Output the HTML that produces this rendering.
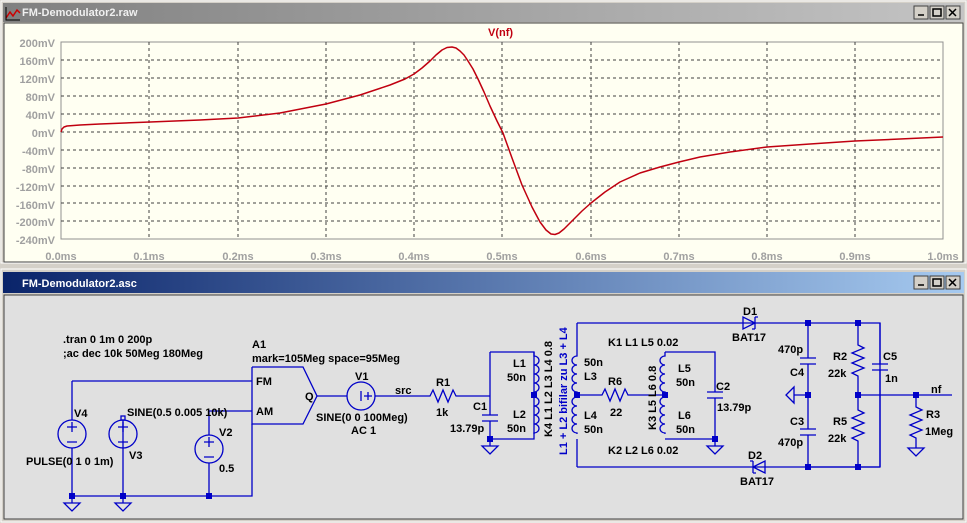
<!DOCTYPE html>
<html><head><meta charset="utf-8"><style>
html,body{margin:0;padding:0;width:967px;height:523px;overflow:hidden;background:#d4d0c8}
svg{display:block}
text{font-family:"Liberation Sans",sans-serif;font-weight:bold;font-size:11px}
</style></head><body>
<svg width="967" height="523" xmlns="http://www.w3.org/2000/svg">
<defs>
<linearGradient id="g1" x1="0" x2="1"><stop offset="0" stop-color="#808080"/><stop offset="1" stop-color="#c4c4c4"/></linearGradient>
<linearGradient id="g2" x1="0" x2="1"><stop offset="0" stop-color="#0a246a"/><stop offset="1" stop-color="#a6caf0"/></linearGradient>
</defs>
<rect width="967" height="523" fill="#d4d0c8"/>
<!-- top window -->
<rect x="1" y="1" width="965" height="262" fill="#d4d0c8" stroke="#fff"/>
<rect x="3" y="3" width="961" height="19" fill="url(#g1)"/>
<path d="M6 18 l4-6 3 4 4-6 3 3" stroke="#c00" stroke-width="1.5" fill="none"/>
<path d="M6 7 v13 h14" stroke="#000" fill="none"/>
<text x="22" y="16" fill="#f0f0f0" font-size="12">FM-Demodulator2.raw</text>
<g fill="#d4d0c8" stroke="#404040"><rect x="914" y="6" width="14" height="13"/><rect x="930" y="6" width="14" height="13"/><rect x="946" y="6" width="14" height="13"/></g>
<path d="M918 15h6M933 9h8v7h-8zM949 9l7 7M956 9l-7 7" stroke="#000" stroke-width="1.5" fill="none"/>
<rect x="4" y="23" width="959" height="239" fill="#fffff2" stroke="#404040"/>
<text x="488" y="36" fill="#c00010" font-size="12">V(nf)</text>
<rect x="61" y="42" width="882" height="197" fill="none" stroke="#909090"/>
<g stroke="#404040" stroke-dasharray="3,3" stroke-width="1">
<path d="M61 60H943M61 78H943M61 96H943M61 114H943M61 132H943M61 150H943M61 168H943M61 186H943M61 203H943M61 221H943"/>
<path d="M149 42V239M238 42V239M326 42V239M414 42V239M502 42V239M591 42V239M679 42V239M767 42V239M855 42V239"/>
</g>
<g fill="#a0a0a0" font-size="12" text-anchor="end">
<text x="55" y="47">200mV</text><text x="55" y="65">160mV</text><text x="55" y="83">120mV</text><text x="55" y="101">80mV</text><text x="55" y="119">40mV</text><text x="55" y="137">0mV</text><text x="55" y="155">-40mV</text><text x="55" y="173">-80mV</text><text x="55" y="191">-120mV</text><text x="55" y="209">-160mV</text><text x="55" y="226">-200mV</text><text x="55" y="244">-240mV</text>
</g>
<g fill="#a0a0a0" font-size="12" text-anchor="middle">
<text x="61" y="260">0.0ms</text><text x="149" y="260">0.1ms</text><text x="238" y="260">0.2ms</text><text x="326" y="260">0.3ms</text><text x="414" y="260">0.4ms</text><text x="502" y="260">0.5ms</text><text x="591" y="260">0.6ms</text><text x="679" y="260">0.7ms</text><text x="767" y="260">0.8ms</text><text x="855" y="260">0.9ms</text><text x="943" y="260">1.0ms</text>
</g>
<polyline fill="none" stroke="#c00010" stroke-width="1.5" stroke-linejoin="round" points="61,132 62,129 64,127 67,126 80,125 100,124 150,122 200,120 238,118 280,113 326,104 360,95 390,85 405,79 414,74 422,68 430,61 436,55 442,50 447,47.5 452,47 456,48 460,51 464,55 468,61 473,69 478,79 484,92 490,106 497,121 503,133 512,158 522,185 532,207 540,222 546,230 551,234 555,234.5 559,233 564,229 572,221 582,211 591,203 605,192 620,182 640,173 660,167 679,162 700,157 730,152 767,147 810,144 855,141 900,139 943,137"/>
<!-- bottom window -->
<rect x="1" y="269" width="965" height="253" fill="#d4d0c8" stroke="#fff"/>
<rect x="3" y="272" width="961" height="21" fill="url(#g2)"/>
<text x="22" y="287" fill="#fff" font-size="12">FM-Demodulator2.asc</text>
<g fill="#d4d0c8" stroke="#404040"><rect x="914" y="276" width="14" height="13"/><rect x="930" y="276" width="14" height="13"/><rect x="946" y="276" width="14" height="13"/></g>
<path d="M918 285h6M933 279h8v7h-8zM949 279l7 7M956 279l-7 7" stroke="#000" stroke-width="1.5" fill="none"/>
<rect x="4" y="295" width="959" height="224" fill="#e0e0e0" stroke="#404040"/>
<g stroke="#0000c8" stroke-width="1.3" fill="none">
<path d="M72 381H252M72 381V420M72 448V496M123 420V496M209 411H252M209 411V435M209 463V496M72 496H252V424"/>
<circle cx="72" cy="434" r="14"/><circle cx="123" cy="434" r="14"/><circle cx="209" cy="449" r="14"/>
<path d="M67 427h10M72 422v10M67 442h10M118 427h10M123 422v10M118 442h10M204 442h10M209 437v10M204 457h10"/>
<rect x="121" y="416" width="4" height="4"/>
<path d="M64 503h16l-8 8zM115 503h16l-8 8z"/>
<path d="M72 496v7M123 496v7"/>
<path d="M252 367H303L317 396L303 424H252V367"/>
<path d="M317 396H347M375 396H430l3-6 5 12 5-12 5 12 5-12 3 6H490M361 391v10M364 396h8M368 392v8"/>
<circle cx="361" cy="396" r="14"/>
<path d="M490 352V415M490 421V439M482 415h16M482 421h16M490 352H534V439H490M490 439v7M482 446h16l-8 8z"/>
<path d="M534 352v4a5 4.5 0 0 1 0 9a5 4.5 0 0 1 0 9a5 4.5 0 0 1 0 9a5 4.5 0 0 1 0 9v1"/>
<path d="M534 395v2a5 4.5 0 0 1 0 9a5 4.5 0 0 1 0 9a5 4.5 0 0 1 0 9a5 4.5 0 0 1 0 9v1"/>
<path d="M577 323V352M577 439V467M577 323H743M757 323H880V467H765M752 467H577"/>
<path d="M577 352v4a5 4.5 0 0 0 0 9a5 4.5 0 0 0 0 9a5 4.5 0 0 0 0 9a5 4.5 0 0 0 0 9v1"/>
<path d="M577 395v2a5 4.5 0 0 0 0 9a5 4.5 0 0 0 0 9a5 4.5 0 0 0 0 9a5 4.5 0 0 0 0 9v1"/>
<path d="M577 395H602l3-6 5 12 5-12 5 12 5-12 3 6H665"/>
<path d="M665 352v4a5 4.5 0 0 0 0 9a5 4.5 0 0 0 0 9a5 4.5 0 0 0 0 9a5 4.5 0 0 0 0 9v1"/>
<path d="M665 395v2a5 4.5 0 0 0 0 9a5 4.5 0 0 0 0 9a5 4.5 0 0 0 0 9a5 4.5 0 0 0 0 9v1"/>
<path d="M665 352H715V392M715 398V439H665M707 392h16M707 398h16M715 439v7M707 446h16l-8 8z"/>
<path d="M743 317v12l12-6zM755 317v12M755 317h3M755 329h-3"/>
<path d="M743 323h14M752 467h13M765 461v12l-12-6zM753 461v12M753 461h-3M753 473h3"/>
<path d="M808 323V358M808 364V429M808 435V467M800 358h16M800 364h16M800 429h16M800 435h16M808 395H794M794 387v16l-8-8z"/>
<path d="M858 323V345l6 3-12 5 12 5-12 5 12 5-12 5 6 3V410l6 3-12 5 12 5-12 5 12 5-12 5 6 3V467"/>
<path d="M880 323V364M880 370V467M872 364h16M872 370h16"/>
<path d="M808 467H880M858 395H952M916 395V407l6 3-12 5 12 5-12 5 12 5-12 5 6 3V448M908 448h16l-8 8z"/>
</g>
<g fill="#0000c8">
<rect x="69" y="493" width="6" height="6"/><rect x="120" y="493" width="6" height="6"/><rect x="206" y="493" width="6" height="6"/>
<rect x="487" y="436" width="6" height="6"/><rect x="531" y="392" width="6" height="6"/><rect x="574" y="392" width="6" height="6"/><rect x="662" y="392" width="6" height="6"/><rect x="712" y="436" width="6" height="6"/>
<rect x="805" y="320" width="6" height="6"/><rect x="855" y="320" width="6" height="6"/><rect x="805" y="392" width="6" height="6"/><rect x="855" y="392" width="6" height="6"/><rect x="913" y="392" width="6" height="6"/><rect x="805" y="464" width="6" height="6"/><rect x="855" y="464" width="6" height="6"/>
</g>
<g fill="#000">
<text x="63" y="343">.tran 0 1m 0 200p</text>
<text x="63" y="357">;ac dec 10k 50Meg 180Meg</text>
<text x="252" y="348">A1</text>
<text x="252" y="362">mark=105Meg space=95Meg</text>
<text x="256" y="385">FM</text><text x="256" y="415">AM</text><text x="305" y="400">Q</text>
<text x="74" y="417">V4</text><text x="127" y="416">SINE(0.5 0.005 10k)</text>
<text x="219" y="436">V2</text><text x="219" y="472">0.5</text>
<text x="26" y="465">PULSE(0 1 0 1m)</text><text x="129" y="459">V3</text>
<text x="355" y="380">V1</text><text x="395" y="394">src</text>
<text x="316" y="421">SINE(0 0 100Meg)</text><text x="351" y="434">AC 1</text>
<text x="436" y="386">R1</text><text x="436" y="416">1k</text>
<text x="473" y="410">C1</text><text x="450" y="432">13.79p</text>
<text x="513" y="367">L1</text><text x="507" y="381">50n</text><text x="513" y="418">L2</text><text x="507" y="432">50n</text>
<text x="584" y="366">50n</text><text x="584" y="380">L3</text><text x="584" y="419">L4</text><text x="584" y="433">50n</text>
<text x="608" y="346">K1 L1 L5 0.02</text><text x="608" y="454">K2 L2 L6 0.02</text>
<text x="608" y="385">R6</text><text x="610" y="416">22</text>
<text x="678" y="372">L5</text><text x="676" y="386">50n</text><text x="678" y="419">L6</text><text x="676" y="433">50n</text>
<text x="716" y="390">C2</text><text x="717" y="411">13.79p</text>
<text x="743" y="315">D1</text><text x="732" y="341">BAT17</text>
<text x="748" y="459">D2</text><text x="740" y="485">BAT17</text>
<text x="778" y="353">470p</text><text x="790" y="376">C4</text><text x="790" y="425">C3</text><text x="778" y="446">470p</text>
<text x="833" y="360">R2</text><text x="828" y="377">22k</text><text x="833" y="425">R5</text><text x="828" y="442">22k</text>
<text x="883" y="360">C5</text><text x="885" y="382">1n</text><text x="931" y="393">nf</text>
<text x="926" y="418">R3</text><text x="925" y="435">1Meg</text>
<text transform="translate(552,437) rotate(-90)">K4 L1 L2 L3 L4 0.8</text>
<text transform="translate(656,430) rotate(-90)">K3 L5 L6 0.8</text>
<text transform="translate(567,455) rotate(-90)" fill="#0000c8">L1 + L2 bifilar zu L3 + L4</text>
</g>
</svg>
</body></html>
